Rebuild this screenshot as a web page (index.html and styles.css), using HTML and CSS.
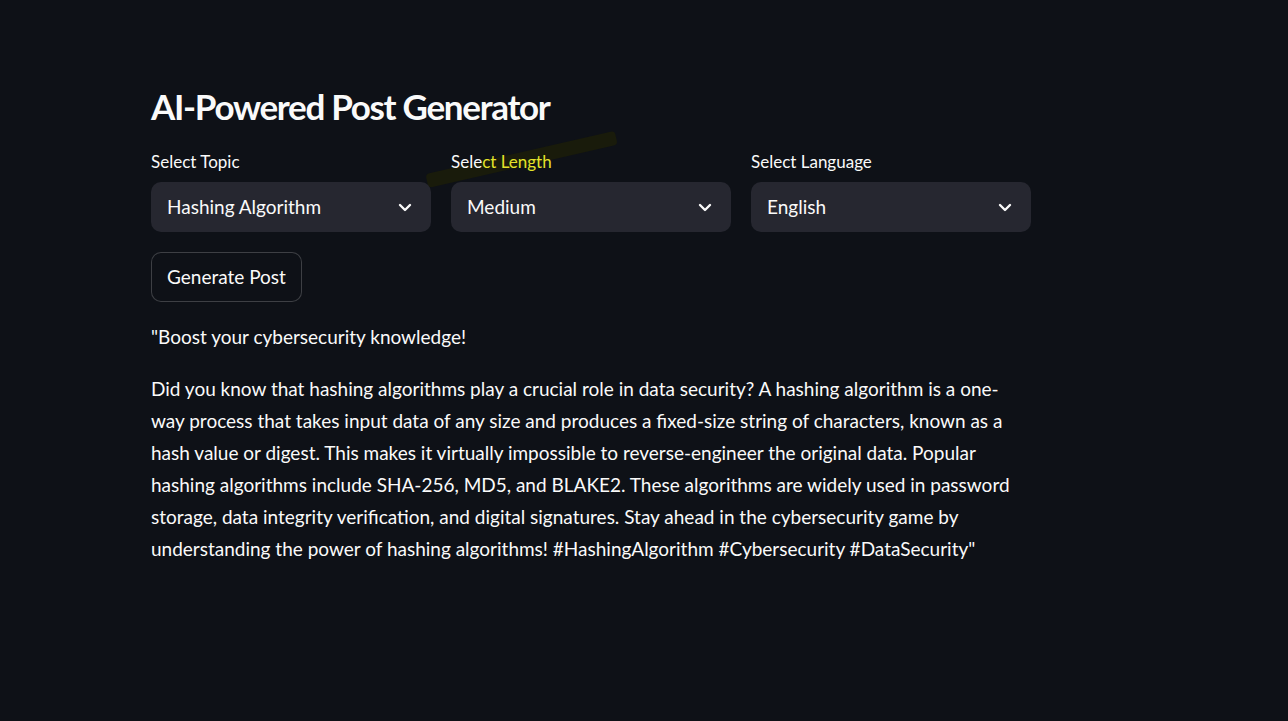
FILE: index.html
```html
<!DOCTYPE html>
<html>
<head>
<meta charset="utf-8">
<link rel="stylesheet" href="styles.css">
</head>
<body>
<main class="container">
  <h1 class="title">AI-Powered Post Generator</h1>
  <div class="selects">
    <div class="field">
      <label class="label">Select Topic</label>
      <div class="select"><span>Hashing Algorithm</span>
        <svg class="chev" viewBox="0 0 14 9" width="14" height="9"><path d="M2 2l5 5 5-5" fill="none" stroke="#fafafa" stroke-width="2.4" stroke-linecap="round" stroke-linejoin="round"/></svg>
      </div>
    </div>
    <div class="field">
      <div class="streak"></div>
      <label class="label">Sele<span class="hl">ct Length</span></label>
      <div class="select"><span>Medium</span>
        <svg class="chev" viewBox="0 0 14 9" width="14" height="9"><path d="M2 2l5 5 5-5" fill="none" stroke="#fafafa" stroke-width="2.4" stroke-linecap="round" stroke-linejoin="round"/></svg>
      </div>
    </div>
    <div class="field">
      <label class="label">Select Language</label>
      <div class="select"><span>English</span>
        <svg class="chev" viewBox="0 0 14 9" width="14" height="9"><path d="M2 2l5 5 5-5" fill="none" stroke="#fafafa" stroke-width="2.4" stroke-linecap="round" stroke-linejoin="round"/></svg>
      </div>
    </div>
  </div>
  <button class="btn">Generate Post</button>
  <div class="output">
    <p>"Boost your cybersecurity knowledge!</p>
    <p>Did you know that hashing algorithms play a crucial role in data security? A hashing algorithm is a one-<br>way process that takes input data of any size and produces a fixed-size string of characters, known as a<br>hash value or digest. This makes it virtually impossible to reverse-engineer the original data. Popular<br>hashing algorithms include SHA-256, MD5, and BLAKE2. These algorithms are widely used in password<br>storage, data integrity verification, and digital signatures. Stay ahead in the cybersecurity game by<br>understanding the power of hashing algorithms! #HashingAlgorithm #Cybersecurity #DataSecurity"</p>
  </div>
</main>
</body>
</html>
```
FILE: styles.css
```css
html, body {
  margin: 0;
  padding: 0;
  background: #0e1117;
  color: #fafafa;
  font-family: "Source Sans Pro", Lato, "Noto Sans", sans-serif;
  height: 100%;
}
.container {
  width: 880px;
  padding: 82px 0 0 151px;
}
.title {
  font-size: 35px;
  font-weight: 700;
  line-height: 48px;
  margin: 0 0 21px 0;
  letter-spacing: -1.3px;
}
.selects {
  display: grid;
  grid-template-columns: repeat(3, 280px);
  column-gap: 20px;
}
.field {
  position: relative;
  display: flex;
  flex-direction: column;
}
.label {
  position: relative;
  z-index: 1;
  font-size: 17px;
  line-height: 22px;
  height: 22px;
  margin-bottom: 9px;
}
.hl {
  color: #e4e32a;
}
.streak {
  position: absolute;
  left: -24px;
  top: 23px;
  width: 194px;
  height: 14px;
  background: #191b0b;
  transform: rotate(-12.9deg);
  transform-origin: left center;
  border-radius: 4px;
  z-index: 0;
}
.select {
  position: relative;
  z-index: 1;
  height: 50px;
  background: #262730;
  border-radius: 10px;
  display: flex;
  align-items: center;
  justify-content: space-between;
  padding: 0 19px 0 16px;
  font-size: 19px;
}
.select span {
  position: relative;
  top: -1px;
}
.chev {
  display: block;
}
.btn {
  margin-top: 20px;
  height: 50px;
  padding: 0 15px 2px;
  background: #0e1117;
  color: #fafafa;
  border: 1px solid rgba(250, 250, 250, 0.2);
  border-radius: 10px;
  font-family: inherit;
  font-size: 19px;
  display: block;
}
.output {
  margin-top: 19px;
  font-size: 19px;
  line-height: 32px;
}
.output p {
  margin: 0 0 20px 0;
  white-space: nowrap;
}
```
